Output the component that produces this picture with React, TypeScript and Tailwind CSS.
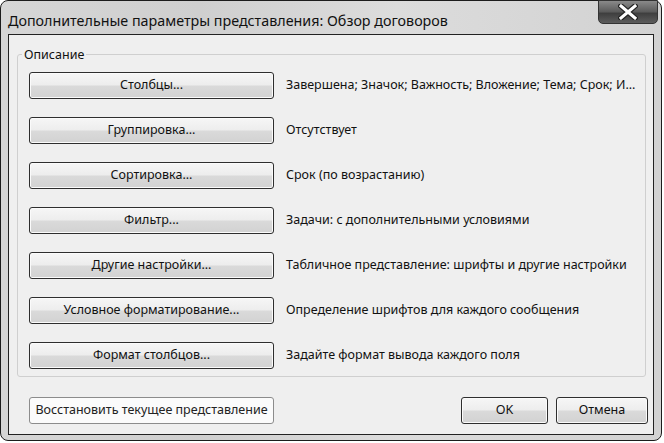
import React from 'react';

const rows = [
  { label: 'Столбцы...', text: 'Завершена; Значок; Важность; Вложение; Тема; Срок; И...' },
  { label: 'Группировка...', text: 'Отсутствует' },
  { label: 'Сортировка...', text: 'Срок (по возрастанию)' },
  { label: 'Фильтр...', text: 'Задачи: с дополнительными условиями' },
  { label: 'Другие настройки...', text: 'Табличное представление: шрифты и другие настройки' },
  { label: 'Условное форматирование...', text: 'Определение шрифтов для каждого сообщения' },
  { label: 'Формат столбцов...', text: 'Задайте формат вывода каждого поля' },
];

function DlgButton({ children, className = '' }: { children: React.ReactNode; className?: string }) {
  return (
    <button
      className={
        'h-[27px] rounded-[3px] border border-[#2e2e2e] bg-[linear-gradient(#f6f6f6_0%,#ededed_48%,#dadada_52%,#d2d2d2_100%)] text-[12.5px] text-[#111] shadow-[inset_0_0_0_1px_#fbfbfb] ' +
        className
      }
    >
      {children}
    </button>
  );
}

export default function App() {
  return (
    <div className="w-[664px] h-[443px] bg-white font-['Noto_Sans',sans-serif] overflow-hidden">
      <div className="w-[662px] h-[441px] rounded-[8px] border border-[#1c1c1c] bg-[linear-gradient(90deg,#d6d6d6,#cfcfcf_30%,#dcdcdc_60%,#d2d2d2)] flex flex-col px-[7px] pb-[5px]">
        {/* title bar */}
        <div className="h-[33px] flex justify-between">
          <div className="pt-[10px] text-[14.3px] text-[#111] leading-[20px]">
            Дополнительные параметры представления: Обзор договоров
          </div>
          <div className="mt-[-1px] mr-[-4px] w-[60px] h-[24px] rounded-b-[5px] border border-[#333] bg-[linear-gradient(#8a8a8a,#5a5a5a_50%,#3e3e3e_55%,#5c5c5c)] flex items-center justify-center">
            <svg width="20" height="16" viewBox="0 0 20 16">
              <path
                d="M3 2 L17 14 M17 2 L3 14"
                stroke="#222"
                strokeWidth="5.5"
                strokeLinecap="square"
              />
              <path
                d="M3 2 L17 14 M17 2 L3 14"
                stroke="#fff"
                strokeWidth="3"
                strokeLinecap="square"
              />
            </svg>
          </div>
        </div>

        {/* client area */}
        <div className="flex-1 border border-[#222] bg-[#efefef] flex flex-col px-[8px] pt-[11px] pb-[10px]">
          <fieldset className="border border-[#cfcfcf] rounded-[3px] pl-[11px] pr-[10px] pb-[7px] mr-[-1px]">
            <legend className="ml-[-7px] px-[2px] text-[12.5px] leading-[17px] text-[#111]">Описание</legend>
            <div className="flex flex-col gap-[18px] pt-[9px]">
              {rows.map((r) => (
                <div key={r.label} className="flex items-center gap-[12px]">
                  <DlgButton className="w-[245px] shrink-0">{r.label}</DlgButton>
                  <span className="text-[12.5px] text-[#111] whitespace-nowrap">{r.text}</span>
                </div>
              ))}
            </div>
          </fieldset>

          <div className="mt-auto flex items-center pl-[12px] mr-[-3px]">
            <button className="w-[245px] h-[27px] rounded-[3px] border border-[#8c8c8c] bg-[#fbfbfb] text-[12.5px] text-[#222]">
              Восстановить текущее представление
            </button>
            <div className="ml-auto flex gap-[8px]">
              <DlgButton className="w-[87px]">OK</DlgButton>
              <DlgButton className="w-[92px]">Отмена</DlgButton>
            </div>
          </div>
        </div>
      </div>
    </div>
  );
}
